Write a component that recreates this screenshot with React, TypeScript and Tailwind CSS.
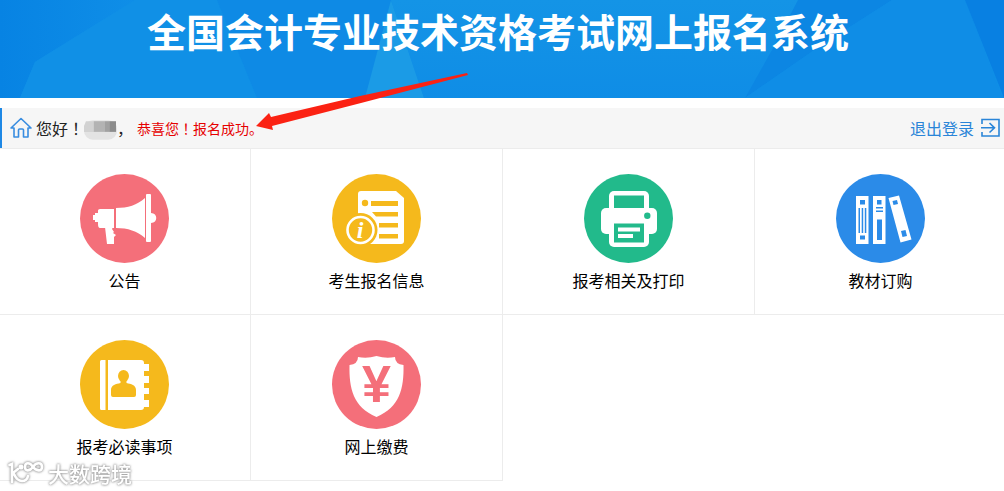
import type { ReactNode } from 'react';

interface MenuItem {
  id: string;
  title: string;
  color: string;
  icon: ReactNode;
}

const menuItems: MenuItem[] = [
  {
    id: 'notice',
    title: '公告',
    color: '#f46f7a',
    icon: (
      <g fill="#fff">
        <path d="M18 36.5Q18 35 20 35H34V54H20Q18 54 18 50V48H15V46H13V41H15V39H18Z" />
        <path d="M25 53H33L32 55L34 58L33 59L36 61L34 63V70H27Z" />
        <path d="M36 34C48 34 57 31 65 24V64C57 57 48 54 36 54Z" />
        <rect x="66" y="20" width="5" height="48" rx="1" />
        <path d="M71 39C78 39 78 49 71 49Z" />
      </g>
    ),
  },
  {
    id: 'info',
    title: '考生报名信息',
    color: '#f5b91c',
    icon: (
      <g>
        <path fill="#fff" d="M29 17H64L72 24V67Q72 70 69 70H29Q26 70 26 67V20Q26 17 29 17Z" />
        <g fill="#f5b91c">
          <circle cx="33" cy="29" r="3.2" />
          <path d="M39 27H66V32H39ZM40 38H66V42.500H44ZM47 49H66V53.500H47ZM47 60H66V64.500H47Z" />
          <circle cx="28.500" cy="56" r="17" />
        </g>
        <circle cx="28.500" cy="56" r="13" fill="none" stroke="#fff" strokeWidth="2.600" />
        <text x="28" y="64" textAnchor="middle" fill="#fff" className="font-['Liberation_Serif',serif] text-[24px] font-bold italic">i</text>
      </g>
    ),
  },
  {
    id: 'print',
    title: '报考相关及打印',
    color: '#22ba8b',
    icon: (
      <g>
        <rect x="25" y="17" width="40" height="30" rx="5" fill="#fff" />
        <rect x="30" y="21.500" width="30" height="12.500" fill="#22ba8b" />
        <rect x="17" y="34" width="56" height="26" rx="5" fill="#fff" />
        <rect x="25" y="45" width="40" height="28" rx="5" fill="#fff" />
        <g fill="#22ba8b">
          <circle cx="63.300" cy="41.700" r="3.200" />
          <rect x="30" y="49.500" width="30" height="19" />
        </g>
        <path fill="#fff" d="M34 53.500H56V57.500H34ZM34 60H49V64H34Z" />
      </g>
    ),
  },
  {
    id: 'books',
    title: '教材订购',
    color: '#2b8be8',
    icon: (
      <g>
        <path fill="#fff" d="M20 22H32.500V70H20ZM37 22H49.500V70H37ZM52.500 24L63 21.500L75.500 65.500L64.500 68.500Z" />
        <path
          fill="#2b8be8"
          d="M24 26H29V30.500H24ZM24 61.500H29V65.500H24ZM22.500 34H24V59H22.500ZM25.700 34H27.200V59H25.700ZM28.800 34H30.300V59H28.800ZM41 26H45.500V30.500H41ZM40 33H47V34.500H40ZM40 36.500H47V38H40ZM41 45.500H46V66H41ZM56.500 27L61 26L62 30L57.500 31ZM65 57L69.500 56L71 62L66.500 63Z"
        />
      </g>
    ),
  },
  {
    id: 'rules',
    title: '报考必读事项',
    color: '#f5b91c',
    icon: (
      <g>
        <path
          fill="#fff"
          d="M21.500 20H25.500V70H21.500Q20 70 20 68.500V21.500Q20 20 21.500 20ZM28 20H61Q64 20 64 23V24H69V31H64V36H69V43H64V48H69V54H64V60H69V67H64Q64 70 61 70H28Z"
        />
        <g fill="#f5b91c">
          <ellipse cx="43.500" cy="36" rx="5.500" ry="6" />
          <path d="M40.500 40H46.500V43C51 44 56 45 56 50V55Q56 57 54 57H33Q31 57 31 55V50C31 45 36 44 40.500 43Z" />
        </g>
      </g>
    ),
  },
  {
    id: 'payment',
    title: '网上缴费',
    color: '#f46f7a',
    icon: (
      <g>
        <path
          fill="#fff"
          d="M26 17Q35 19 44.500 16Q54 19 63 17Q63 24 71.500 25C72 48 68 67 44.500 77C21 67 17 48 17.500 25Q26 24 26 17Z"
        />
        <text x="44.500" y="62" textAnchor="middle" fill="#f46f7a" className="font-['Liberation_Sans',sans-serif] text-[52px] font-bold">¥</text>
      </g>
    ),
  },
];

function Header() {
  return (
    <header className="relative overflow-hidden bg-[#1090e7] pt-1.5 pr-2 pb-11">
      <svg className="absolute inset-0 h-full w-full" viewBox="0 0 1004 98" preserveAspectRatio="none" aria-hidden="true">
        <defs>
          <linearGradient id="edge" x1="0" x2="1">
            <stop offset="0" stopColor="#0783e3" />
            <stop offset="1" stopColor="#0f8ee7" />
          </linearGradient>
          <linearGradient id="mid" x1="0" x2="0" y1="0" y2="1">
            <stop offset="0" stopColor="#1494e6" />
            <stop offset="1" stopColor="#0f8de6" />
          </linearGradient>
        </defs>
        <path fill="url(#edge)" d="M0 0H135L35 62L20 98H0Z" />
        <path fill="#1090e6" d="M135 0H217L257 98H20L35 62Z" />
        <path fill="#0e8ae5" d="M217 0H393L365 98H257Z" />
        <path fill="#1b9be6" d="M391 0L424 98H365Z" />
        <path fill="url(#mid)" d="M391 0H800L745 98H424Z" />
        <path fill="#0c86e3" d="M798 0H892L820 46L745 98L772 50Z" />
        <path fill="#0f8de6" d="M892 0H965L1003 98H745L820 46Z" />
        <path fill="#0880e2" d="M965 0H1004V98Z" />
      </svg>
      <h1 className="relative text-center text-[39px] leading-[48px] font-bold whitespace-nowrap text-white">
        全国会计专业技术资格考试网上报名系统
      </h1>
    </header>
  );
}

// the JP face centres the full-width mark in its box
function Exclamation() {
  return <span className="font-['Noto_Sans_CJK_JP',sans-serif]" lang="ja">！</span>;
}

function UserBar() {
  return (
    <div className="relative mt-2.5 flex h-10 items-center justify-between border-l-2 border-[#1e88e5] bg-[#f6f6f6] pr-1 pl-2">
      <div className="flex items-center text-base text-[#222]">
        <svg className="mr-1 h-[22px] w-[22px]" viewBox="0 0 22 22" fill="none" stroke="#398de0" strokeWidth="1.600" strokeLinejoin="round" aria-hidden="true">
          <path d="M1 11L11 1.500L21 11H18V20H13.500V13Q13.500 12 12.500 12H9.500Q8.500 12 8.500 13V20H4V11Z" />
        </svg>
        <span>您好<Exclamation /></span>
        {/* masked user name */}
        <svg className="h-6 w-[33px]" viewBox="0 0 34 24" aria-hidden="true">
          <rect y="4" width="34" height="20" rx="9" fill="#e3e3e3" />
          <path fill="#d2d2d2" d="M2 5H10V16H0V10Z" />
          <path fill="#b3b3b3" d="M10 5H21V16H10Z" />
          <path fill="#a1a1a1" d="M21 5H26V16H21Z" />
          <path fill="#8c8c8c" d="M26 5H33V16H26Z" />
        </svg>
        <span>，</span>
        <span className="ml-1 text-sm text-[#e60000]">恭喜您<Exclamation />报名成功。</span>
      </div>
      <a href="#logout" className="flex items-center gap-1.5 text-base text-[#2a85d8]">
        退出登录
        <svg className="h-5 w-5" viewBox="0 0 20 20" fill="none" stroke="currentColor" strokeWidth="1.600" aria-hidden="true">
          <path d="M2 6V1.500H19V18H2V14M1 9.800H14M9.500 5L14.500 9.800L9.500 14.500" />
        </svg>
      </a>
      <svg className="absolute -top-9 left-[254px] h-[60px] w-[214px]" viewBox="0 0 214 60" aria-hidden="true">
        <path fill="#fb2213" d="M0 54L13 41L15 45L104 24L211 1L212 3L105 31L16 54L17 58Z" />
      </svg>
    </div>
  );
}

function MenuCard({ item }: { item: MenuItem }) {
  return (
    <a
      href={`#${item.id}`}
      className="flex flex-col items-center border-r border-b border-[#ececec] pt-[25px] pb-[22px] text-base leading-6 text-black"
    >
      <svg className="mb-[5px] h-[89px] w-[89px]" viewBox="0 0 89 89" aria-hidden="true">
        <circle cx="44.500" cy="44.500" r="44.500" fill={item.color} />
        {item.icon}
      </svg>
      {item.title}
    </a>
  );
}

function Watermark() {
  return (
    <div className="absolute bottom-1 left-2 flex items-center gap-1 text-white [filter:drop-shadow(0_0_1px_#999)_drop-shadow(0_0_1px_#bbb)]">
      <svg className="h-6 w-9" viewBox="0 0 36 24" fill="none" stroke="currentColor" strokeWidth="2.600" strokeLinecap="round" aria-hidden="true">
        <path d="M1.500 4L4 3V21M5 12L10 8M6 13Q9 20 14 20Q19 20 20 15" />
        <circle cx="13" cy="6" r="1.200" />
        <path d="M25 6C22 1 17 1 17 6S22 10 25 6C28 1 34 1 34 6S28 10 25 6Z" />
      </svg>
      <span className="text-[21px] leading-7 font-medium">大数跨境</span>
    </div>
  );
}

export default function App() {
  return (
    <div className="relative min-h-screen overflow-hidden bg-white font-['Noto_Sans_CJK_SC',sans-serif]">
      <Header />
      <UserBar />
      <nav className="-mr-[3px] -ml-px grid grid-cols-4 border-t border-[#ececec]">
        {menuItems.map((item) => (
          <MenuCard key={item.id} item={item} />
        ))}
      </nav>
      <Watermark />
    </div>
  );
}
